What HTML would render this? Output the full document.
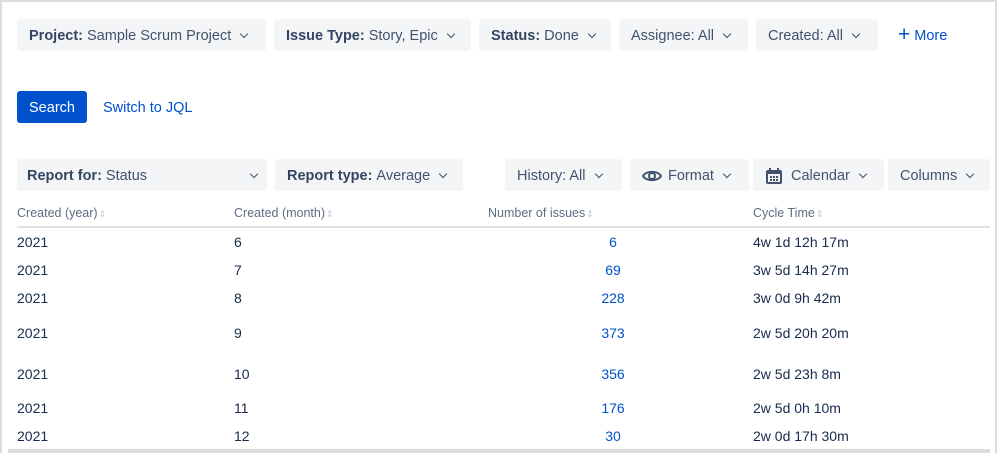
<!DOCTYPE html>
<html><head><meta charset="utf-8"><style>
*{box-sizing:border-box;margin:0;padding:0}
body{width:997px;height:453px;background:#fff;font-family:"Liberation Sans",sans-serif;color:#172b4d;position:relative;overflow:hidden}
.frame{position:absolute;left:0;top:0;width:997px;height:453px;border:2px solid #dcdcdc;border-bottom:none}
.btn{position:absolute;height:32px;background:#f4f5f7;border-radius:3px;font-size:14.5px;color:#42526e;display:flex;align-items:center;padding:1px 12px 0;white-space:nowrap}
.btn b{color:#344563;margin-right:4px}
.chev{display:inline-block;width:6px;height:6px;border-right:1.5px solid #42526e;border-bottom:1.5px solid #42526e;transform:rotate(45deg);margin-left:10px;margin-top:-4px}
.search{position:absolute;left:17px;top:91px;width:70px;height:32px;background:#0052cc;color:#fff;border-radius:3px;font-size:14.5px;display:flex;align-items:center;justify-content:center;padding-top:1px}
.link{position:absolute;color:#0052cc;font-size:14.5px}
.th{position:absolute;top:206px;font-size:12.5px;color:#5e6c84}
.th:after{content:"⇕";color:#c1c7d0;font-size:9px;margin-left:1px}
.hline{position:absolute;left:17px;top:226px;width:973px;height:2px;background:#dfe1e6}
.td{position:absolute;font-size:14px;color:#172b4d}
.n{position:absolute;font-size:14px;color:#0052cc;width:60px;text-align:center;left:583px}
.bot{position:absolute;left:8px;top:449px;width:982px;height:4px;background:#dcdcdc}
</style></head><body>
<div class="frame"></div>
<div class="btn" style="left:17px;top:19px;width:249px;height:32px"><b>Project:</b>Sample Scrum Project<span class="chev"></span></div>
<div class="btn" style="left:274px;top:19px;width:197px"><b>Issue Type:</b>Story, Epic<span class="chev"></span></div>
<div class="btn" style="left:479px;top:19px;width:132px"><b>Status:</b>Done<span class="chev"></span></div>
<div class="btn" style="left:619px;top:19px;width:129px">Assignee: All<span class="chev"></span></div>
<div class="btn" style="left:756px;top:19px;width:122px">Created: All<span class="chev"></span></div>
<div class="link" style="left:898px;top:27px"><span style="font-size:21px;line-height:14px;position:relative;top:1px">+</span> More</div>
<div class="search">Search</div>
<div class="link" style="left:103px;top:100px">Switch to JQL</div>
<div class="btn" style="left:17px;top:159px;width:250px;justify-content:space-between;padding:1px 10px 0"><span><b>Report for:</b>Status</span><span class="chev"></span></div>
<div class="btn" style="left:275px;top:159px;width:188px"><b>Report type:</b>Average<span class="chev"></span></div>
<div class="btn" style="left:505px;top:159px;width:117px">History: All<span class="chev"></span></div>
<div class="btn" style="left:630px;top:159px;width:119px"><svg width="20" height="16" viewBox="0 0 20 16" style="margin-right:6px"><path d="M1 8C4 2.5 16 2.5 19 8 16 13.5 4 13.5 1 8Z" fill="none" stroke="#42526e" stroke-width="2"/><circle cx="10" cy="8" r="3" fill="none" stroke="#42526e" stroke-width="2"/></svg>Format<span class="chev"></span></div>
<div class="btn" style="left:753px;top:159px;width:131px"><svg width="18" height="18" viewBox="0 0 18 18" style="margin-right:8px"><rect x="1" y="3" width="16" height="14" rx="2" fill="#42526e"/><rect x="4" y="1" width="2" height="4" fill="#42526e"/><rect x="12" y="1" width="2" height="4" fill="#42526e"/><rect x="3" y="7" width="12" height="8" fill="#f4f5f7"/><g fill="#42526e"><rect x="5" y="9" width="2" height="2"/><rect x="8" y="9" width="2" height="2"/><rect x="11" y="9" width="2" height="2"/><rect x="5" y="12" width="2" height="2"/><rect x="8" y="12" width="2" height="2"/><rect x="11" y="12" width="2" height="2"/></g></svg>Calendar<span class="chev"></span></div>
<div class="btn" style="left:888px;top:159px;width:102px">Columns<span class="chev"></span></div>
<div class="th" style="left:17px">Created (year)</div>
<div class="th" style="left:234px">Created (month)</div>
<div class="th" style="left:488px">Number of issues</div>
<div class="th" style="left:753px">Cycle Time</div>
<div class="hline"></div>
<div class="td" style="left:17px;top:234px">2021</div><div class="td" style="left:234px;top:234px">6</div><div class="n" style="top:234px">6</div><div class="td" style="left:753px;top:234px">4w 1d 12h 17m</div>
<div class="td" style="left:17px;top:262px">2021</div><div class="td" style="left:234px;top:262px">7</div><div class="n" style="top:262px">69</div><div class="td" style="left:753px;top:262px">3w 5d 14h 27m</div>
<div class="td" style="left:17px;top:290px">2021</div><div class="td" style="left:234px;top:290px">8</div><div class="n" style="top:290px">228</div><div class="td" style="left:753px;top:290px">3w 0d 9h 42m</div>
<div class="td" style="left:17px;top:325px">2021</div><div class="td" style="left:234px;top:325px">9</div><div class="n" style="top:325px">373</div><div class="td" style="left:753px;top:325px">2w 5d 20h 20m</div>
<div class="td" style="left:17px;top:366px">2021</div><div class="td" style="left:234px;top:366px">10</div><div class="n" style="top:366px">356</div><div class="td" style="left:753px;top:366px">2w 5d 23h 8m</div>
<div class="td" style="left:17px;top:400px">2021</div><div class="td" style="left:234px;top:400px">11</div><div class="n" style="top:400px">176</div><div class="td" style="left:753px;top:400px">2w 5d 0h 10m</div>
<div class="td" style="left:17px;top:428px">2021</div><div class="td" style="left:234px;top:428px">12</div><div class="n" style="top:428px">30</div><div class="td" style="left:753px;top:428px">2w 0d 17h 30m</div>
<div class="bot"></div>
</body></html>
